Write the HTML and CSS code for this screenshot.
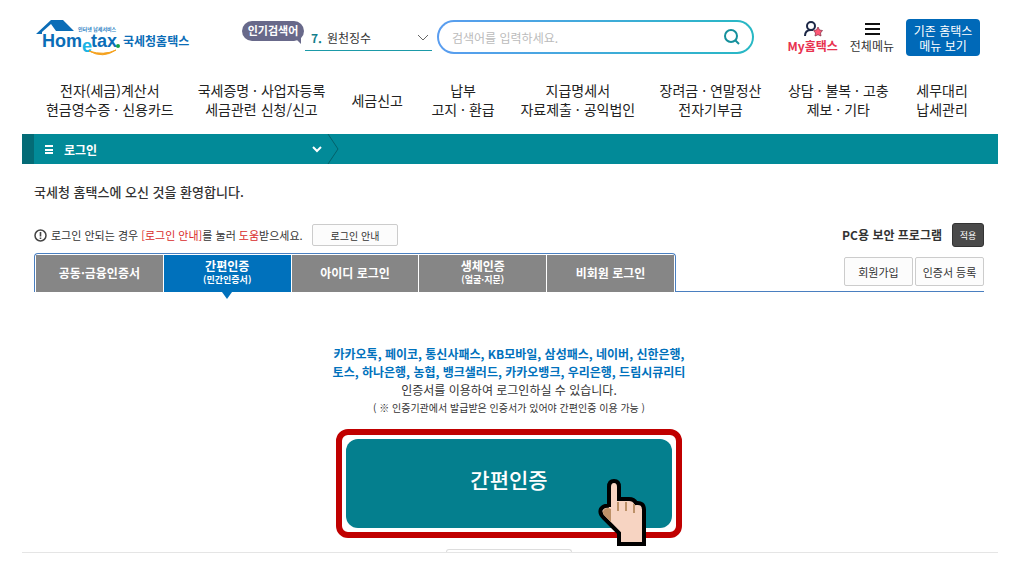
FILE: index.html
```
<!DOCTYPE html>
<html lang="ko">
<head>
    <meta charset="UTF-8">
    <meta name="viewport" content="width=device-width, initial-scale=1.0">
    <title>국세청 홈택스</title>
    <link rel="stylesheet" href="styles.css">
</head>
<body>
    <header class="header">
        <a class="logo" href="#">
            <svg width="158" height="38" viewBox="0 0 158 38">
                <path d="M0 15 L15 1 H27 L38 12 H20 L15 5 L6 13 V15 Z" fill="#0b6db7"/>
                <text class="logo-small" x="42" y="12">인터넷 납세서비스</text>
                <text class="logo-en" x="6" y="28">Hom</text>
                <text class="logo-en logo-e" x="46" y="33">e</text>
                <text class="logo-en" x="55" y="28">tax</text>
                <circle cx="82" cy="27" r="2" fill="#15a04a"/>
                <path d="M53 32 Q67 40 80 31 Q68 37 53 32 Z" fill="#f5a11c" stroke="#f5a11c"/>
                <text class="logo-ko" x="87" y="27">국세청홈택스</text>
            </svg>
        </a>

        <span class="bubble">인기검색어</span>
        <div class="popular">
            <label for="popular">7.</label>
            <select id="popular">
                <option>원천징수</option>
            </select>
            <svg width="12" height="8" viewBox="0 0 12 8" fill="none" stroke="#666"><path d="M1 1 L6 6 L11 1"/></svg>
        </div>

        <form class="search">
            <input type="text" placeholder="검색어를 입력하세요." aria-label="검색어">
            <button type="button" aria-label="검색">
                <svg width="18" height="18" viewBox="0 0 18 18" fill="none" stroke="#14909c" stroke-width="2"><circle cx="8" cy="8" r="6"/><path d="M12 12 L16 16"/></svg>
            </button>
        </form>

        <div class="links">
            <a class="my" href="#">
                <svg width="20" height="17" viewBox="0 0 20 17" fill="none" stroke="#1c2746" stroke-width="2"><circle cx="8" cy="6" r="4"/><path d="M2 16 Q2 10 8 10 H10"/><path d="M15 7 l1.500 3 3 .5 -2 2.500 .5 3 -3 -1.300 -3 1.300 .5 -3 -2 -2.500 3 -.5 Z" fill="#ff5876" stroke="#7b2e45" stroke-width=".7"/></svg>
                <span>My홈택스</span>
            </a>
            <a class="all" href="#">
                <svg width="16" height="17" viewBox="0 0 16 17" stroke="#111" stroke-width="2"><path d="M1 4 H16 M1 9 H16 M1 14 H16"/></svg>
                <span>전체메뉴</span>
            </a>
            <button class="old-menu" type="button">기존 홈택스<br>메뉴 보기</button>
        </div>
    </header>

    <nav class="gnb">
        <a href="#">전자(세금)계산서<br>현금영수증 · 신용카드</a>
        <a href="#">국세증명 · 사업자등록<br>세금관련 신청/신고</a>
        <a href="#">세금신고</a>
        <a href="#">납부<br>고지 · 환급</a>
        <a href="#">지급명세서<br>자료제출 · 공익법인</a>
        <a href="#">장려금 · 연말정산<br>전자기부금</a>
        <a href="#">상담 · 불복 · 고충<br>제보 · 기타</a>
        <a href="#">세무대리<br>납세관리</a>
    </nav>

    <div class="location">
        <button class="location-menu" type="button">
            <svg width="8" height="9" viewBox="0 0 8 9" stroke="#fff" stroke-width="2"><path d="M0 1 H8 M0 5 H8 M0 8 H8"/></svg>
            <span>로그인</span>
            <svg class="down" width="10" height="7" viewBox="0 0 10 7" fill="none" stroke="#fff" stroke-width="2"><path d="M1 1 L5 5 L9 1"/></svg>
        </button>
        <svg width="12" height="30" viewBox="0 0 12 30" fill="none" stroke="#04606a"><path d="M1 0 L11 15 L1 30"/></svg>
    </div>

    <main class="content">
        <h1>국세청 홈택스에 오신 것을 환영합니다.</h1>

        <div class="guide">
            <svg width="13" height="13" viewBox="0 0 13 13" fill="none" stroke="#444"><circle cx="6.500" cy="6.500" r="5.500" stroke-width="1.500"/><path d="M6.500 3 V7.500 M6.500 8.500 V10" stroke-width="1.600"/></svg>
            <p>로그인 안되는 경우 <em>[로그인 안내]</em>를 눌러 <em>도움</em>받으세요.</p>
            <button class="btn" type="button">로그인 안내</button>
            <strong>PC용 보안 프로그램</strong>
            <button class="apply" type="button">적용</button>
        </div>

        <div class="tab-row">
            <div class="tabs">
                <button type="button">공동·금융인증서</button>
                <button class="on" type="button">간편인증<small>(민간인증서)</small></button>
                <button type="button">아이디 로그인</button>
                <button type="button">생체인증<small>(얼굴·지문)</small></button>
                <button type="button">비회원 로그인</button>
            </div>
            <div class="side">
                <button class="btn" type="button">회원가입</button>
                <button class="btn" type="button">인증서 등록</button>
            </div>
        </div>

        <section class="simple">
            <p class="banks">카카오톡, 페이코, 통신사패스, KB모바일, 삼성패스, 네이버, 신한은행,<br>토스, 하나은행, 농협, 뱅크샐러드, 카카오뱅크, 우리은행, 드림시큐리티</p>
            <p>인증서를 이용하여 로그인하실 수 있습니다.</p>
            <p class="note">( ※ 인증기관에서 발급받은 인증서가 있어야 간편인증 이용 가능 )</p>
            <div class="frame">
                <button class="auth" type="button">간편인증</button>
                <!-- pointing hand -->
                <svg class="hand" width="50" height="70" viewBox="0 0 50 70">
                    <path d="M11 29 V9 Q11 3 16 3 Q21 3 21 9 V21 H31 Q36 21 38 25 Q46 24 46 32 V66 H21 V55 L6 40 Q1 35 3 31 Q6 27 11 28 Z" fill="#f7d4c2" stroke="#000" stroke-width="4"/>
                    <path d="M5 33 Q8 28 13 31 V44 L8 39 Q4 36 5 33 Z" fill="#bd9168"/>
                    <path d="M20 24 V33 M28 24 V33 M36 26 V35" stroke="#bd9168" stroke-width="2"/>
                </svg>
            </div>
        </section>
        <div class="next"></div>
    </main>
</body>
</html>
```
FILE: styles.css
```
* {
    box-sizing: border-box;
}
body {
    margin: 0;
    padding: 0 20px 0 22px;
    background-color: #fff;
    color: #333;
    font-family: "Noto Sans CJK KR", sans-serif;
    font-size: 12px;
    line-height: 18px;
}
a {
    color: inherit;
    text-decoration: none;
}
button, input, select {
    font-family: inherit;
    font-size: 12px;
    color: inherit;
    padding: 0;
}
p, h1 {
    margin: 0;
}
svg {
    display: block;
    flex: none;
}
.header {
    display: flex;
    align-items: flex-start;
    padding: 19px 18px 0 14px;
}
.logo {
    width: 206px;
}
.logo-small {
    font-size: 5px;
    font-weight: bold;
    fill: #2c82c4;
}
.logo-en {
    font-family: "Liberation Sans Narrow", "Liberation Sans", sans-serif;
    font-size: 18px;
    font-weight: bold;
    fill: #0b6db7;
}
.logo-e {
    fill: #19b5e5;
}
.logo-ko {
    font-size: 12px;
    font-weight: bold;
    fill: #0b6db7;
}
.bubble {
    position: relative;
    width: 62px;
    height: 20px;
    margin-top: 2px;
    border-radius: 10px;
    background-color: #68698a;
    color: #fff;
    font-size: 11px;
    font-weight: bold;
    text-align: center;
}
.bubble::after {
    content: "";
    position: absolute;
    right: 3px;
    bottom: -3px;
    border-top: 6px solid #68698a;
    border-left: 6px solid transparent;
}
.popular {
    display: flex;
    align-items: center;
    width: 127px;
    height: 26px;
    margin: 6px 5px 0 1px;
    padding: 0 3px 0 6px;
    border-bottom: 1px solid #1b9aa8;
}
.popular label {
    width: 16px;
    color: #14808c;
    font-weight: bold;
}
.popular select {
    flex: 1;
    border: 0;
    background: none;
    appearance: none;
}
.search {
    display: flex;
    align-items: center;
    flex: 1;
    height: 34px;
    margin-top: 1px;
    padding: 0 11px 0 13px;
    border: 2px solid transparent;
    border-radius: 17px;
    background: linear-gradient(#fff, #fff) padding-box, linear-gradient(to right, #5a9df0, #27b8c4) border-box;
}
.search input {
    flex: 1;
    min-width: 0;
    border: 0;
    outline: none;
    background: none;
}
.search input::placeholder {
    color: #bbb;
}
.search button {
    border: 0;
    background: none;
}
.links {
    display: flex;
    gap: 12px;
    margin-left: 34px;
}
.links a {
    display: flex;
    flex-direction: column;
    align-items: center;
    padding-top: 1px;
    white-space: nowrap;
}
.my {
    color: #e8324f;
    font-weight: bold;
}
.old-menu {
    width: 74px;
    height: 37px;
    border: 0;
    border-radius: 4px;
    background-color: #0069b8;
    color: #fff;
    line-height: 15px;
}
.gnb {
    display: grid;
    grid-template-columns: 176fr 126fr 104fr 68fr 162fr 104fr 152fr 56fr 28fr;
    align-items: center;
    margin-top: 24px;
    color: #222;
    font-size: 14px;
    line-height: 19px;
    text-align: center;
    white-space: nowrap;
}
.location {
    display: flex;
    height: 30px;
    margin-top: 15px;
    border-left: 12px solid #046b76;
    background-color: #028a98;
}
.location-menu {
    display: flex;
    align-items: center;
    gap: 11px;
    width: 293px;
    padding: 0 5px 0 11px;
    border: 0;
    background: none;
    color: #fff;
    font-weight: bold;
}
.down {
    margin-left: auto;
}
.content {
    padding: 0 14px 0 12px;
}
h1 {
    margin-top: 18px;
    font-size: 13px;
    font-weight: 500;
    line-height: 20px;
}
.guide {
    display: flex;
    align-items: center;
    gap: 4px;
    margin-top: 21px;
}
.guide p {
    min-width: 257px;
    font-size: 11px;
}
.guide em {
    color: #d92b2b;
    font-style: normal;
}
.guide strong {
    margin: 0 6px 0 auto;
}
.btn {
    height: 22px;
    border: 1px solid #ccc;
    border-radius: 2px;
    background-color: #fcfcfc;
    font-size: 11px;
}
.guide .btn {
    width: 86px;
    font-size: 10px;
}
.apply {
    width: 32px;
    height: 24px;
    border: 1px solid #333;
    border-radius: 3px;
    background-color: #4a4a4a;
    color: #fff;
    font-size: 9px;
}
.tab-row {
    display: flex;
    justify-content: space-between;
    margin-top: 6px;
    border-bottom: 1px solid #4a7fc0;
}
.tabs {
    display: grid;
    grid-template-columns: repeat(5, 1fr);
    gap: 1px;
    width: 642px;
    height: 39px;
    margin-bottom: -1px;
    padding: 1px 1px 0;
    border: 1px solid #4a7fc0;
    border-bottom: 0;
    border-radius: 4px 4px 0 0;
    background-color: #fff;
}
.tabs button {
    position: relative;
    padding-bottom: 3px;
    border: 0;
    background-color: #868686;
    color: #fff;
    font-weight: bold;
    line-height: 15px;
}
.tabs small {
    display: block;
    font-size: 9px;
    line-height: 14px;
}
.tabs .on {
    background-color: #0071bc;
}
.tabs .on::after {
    content: "";
    position: absolute;
    top: 100%;
    left: 50%;
    margin-left: -5px;
    border: 5px solid transparent;
    border-top: 7px solid #0071bc;
    border-bottom: 0;
}
.side {
    display: flex;
    gap: 2px;
    padding-top: 4px;
}
.side .btn {
    width: 69px;
    height: 29px;
}
.simple {
    margin-top: 53px;
    text-align: center;
}
.banks {
    color: #0071bc;
    font-weight: bold;
}
.note {
    font-size: 10px;
}
.frame {
    position: relative;
    width: 346px;
    margin: 12px auto 0;
    padding: 4px;
    border: 6px solid #c00000;
    border-radius: 12px;
}
.auth {
    display: block;
    width: 100%;
    height: 89px;
    padding-bottom: 10px;
    border: 0;
    border-radius: 12px;
    background-color: #047f8e;
    color: #fff;
    font-size: 21px;
    font-weight: 500;
}
.hand {
    position: absolute;
    right: 28px;
    bottom: -16px;
}
.next {
    width: 126px;
    height: 3px;
    margin: 11px auto 0;
    border: 1px solid #ddd;
    border-bottom: 0;
    border-radius: 3px 3px 0 0;
}
.content::after {
    content: "";
    display: block;
    margin: 0 -14px 0 -12px;
    border-top: 1px solid #e5e5e5;
}
```
